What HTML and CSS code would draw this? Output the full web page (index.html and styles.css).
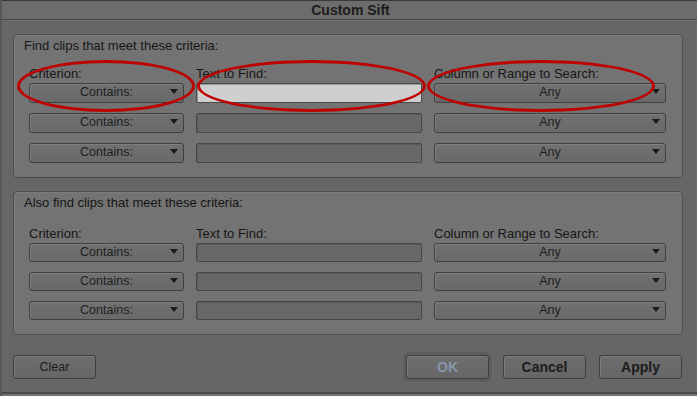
FILE: index.html
```html
<!DOCTYPE html>
<html lang="en">
<head>
  <meta charset="UTF-8" />
  <title>Custom Sift</title>
  <link rel="stylesheet" href="styles.css">
</head>
<body>
  <div class="dialog">
    <div class="titlebar">Custom Sift</div>
    <div class="content">
      <section class="panel">
        <div class="panel-title">Find clips that meet these criteria:</div>
        <div class="labels">
          <div>Criterion:</div>
          <div>Text to Find:</div>
          <div>Column or Range to Search:</div>
        </div>
        <div class="grid">
          <div class="dropdown">Contains:</div>
          <div class="field active"></div>
          <div class="dropdown">Any</div>

          <div class="dropdown">Contains:</div>
          <div class="field"></div>
          <div class="dropdown">Any</div>

          <div class="dropdown">Contains:</div>
          <div class="field"></div>
          <div class="dropdown">Any</div>
        </div>
        <div class="mark mark-criterion"></div>
        <div class="mark mark-text"></div>
        <div class="mark mark-column"></div>
      </section>

      <section class="panel panel-also">
        <div class="panel-title">Also find clips that meet these criteria:</div>
        <div class="labels">
          <div>Criterion:</div>
          <div>Text to Find:</div>
          <div>Column or Range to Search:</div>
        </div>
        <div class="grid">
          <div class="dropdown">Contains:</div>
          <div class="field"></div>
          <div class="dropdown">Any</div>

          <div class="dropdown">Contains:</div>
          <div class="field"></div>
          <div class="dropdown">Any</div>

          <div class="dropdown">Contains:</div>
          <div class="field"></div>
          <div class="dropdown">Any</div>
        </div>
      </section>

      <div class="buttons">
        <button class="btn">Clear</button>
        <div class="spacer"></div>
        <button class="btn bold disabled focused">OK</button>
        <button class="btn bold">Cancel</button>
        <button class="btn bold">Apply</button>
      </div>
    </div>
    <div class="footer"></div>
  </div>
</body>
</html>
```

FILE: styles.css
```css
body {
  margin: 0;
  padding: 0;
  background: #646464;
  font-family: 'Liberation Sans', Arial, sans-serif;
  font-size: 13px;
  color: #161616;
}
.dialog {
  width: 697px;
  height: 396px;
  box-sizing: border-box;
  border-left: 2px solid #585858;
  background: #666666;
  display: flex;
  flex-direction: column;
  overflow: hidden;
}
.titlebar {
  height: 18px;
  line-height: 18px;
  border-top: 1px solid #3a3a3a;
  border-bottom: 1px solid #484848;
  background: #6c6c6c;
  text-align: center;
  font-weight: bold;
  font-size: 14px;
  color: #1c1c1c;
  padding-left: 2px;
}
.content {
  flex: 1;
  padding: 13px 14px 0 11px;
  border-top: 1px solid #707070;
}
.panel {
  position: relative;
  height: 144px;
  box-sizing: border-box;
  border: 1px solid #4e4e4e;
  border-radius: 4px;
  background: #737373;
  padding: 4px 16px 0 10px;
  box-shadow: inset 1px 1px 0 #7c7c7c;
}
.panel + .panel {
  margin-top: 13px;
}
.panel-title {
  line-height: 14px;
  height: 14px;
}
.labels,
.grid {
  display: grid;
  grid-template-columns: 155px 226px 232px;
  column-gap: 12px;
  padding-left: 5px;
}
.labels {
  margin-top: 14px;
  margin-bottom: 2px;
  line-height: 14px;
}
.panel-also .labels {
  margin-top: 17px;
}
.grid {
  row-gap: 10px;
  grid-auto-rows: 20px;
}
.panel-also .grid {
  grid-auto-rows: 19px;
}
.dropdown {
  position: relative;
  box-sizing: border-box;
  border: 1px solid #404040;
  border-radius: 3px;
  background: linear-gradient(#717171, #696969);
  box-shadow: inset 1px 1px 0 #7e7e7e;
  text-align: center;
  font-size: 12.5px;
  line-height: 17px;
  color: #1e1e1e;
}
.dropdown::after {
  content: '';
  position: absolute;
  right: 5px;
  top: 5px;
  border-left: 4px solid transparent;
  border-right: 4px solid transparent;
  border-top: 5px solid #1a1a1a;
}
.field {
  box-sizing: border-box;
  border: 1px solid #474747;
  border-radius: 2px;
  background: #686868;
  box-shadow: inset 1px 1px 0 #5a5a5a;
}
.field.active {
  background: #cfcfcf;
  border-color: #4a4a4a;
  box-shadow: inset 1px 1px 0 #9a9a9a;
}
.mark {
  position: absolute;
  top: 25px;
  height: 52px;
  box-sizing: border-box;
  border: 3px solid #bf0000;
  border-radius: 50%;
  pointer-events: none;
}
.mark-criterion {
  left: 3px;
  width: 178px;
}
.mark-text {
  left: 183px;
  width: 229px;
}
.mark-column {
  left: 413px;
  width: 228px;
}
.buttons {
  display: flex;
  align-items: center;
  margin-top: 20px;
  margin-right: 1px;
  gap: 13px;
}
.spacer {
  flex: 1;
}
.btn {
  width: 83px;
  height: 24px;
  box-sizing: border-box;
  border: 1px solid #3e3e3e;
  border-radius: 3px;
  background: linear-gradient(#6e6e6e, #666666);
  box-shadow: inset 1px 1px 0 #7c7c7c;
  font-family: 'Liberation Sans', Arial, sans-serif;
  font-size: 12.5px;
  color: #1c1c1c;
  padding: 0;
}
.btn.bold {
  font-weight: bold;
  font-size: 14px;
}
.btn.disabled {
  color: #8796ab;
}
.btn.focused {
  margin-right: 1px;
  box-shadow: inset 1px 1px 0 #7c7c7c, 0 0 0 3px #5c5c5c, 0 0 0 4px #6a6a6a;
}
.footer {
  height: 2px;
  border-top: 2px solid #4a4a4a;
  background: #727272;
}
```
